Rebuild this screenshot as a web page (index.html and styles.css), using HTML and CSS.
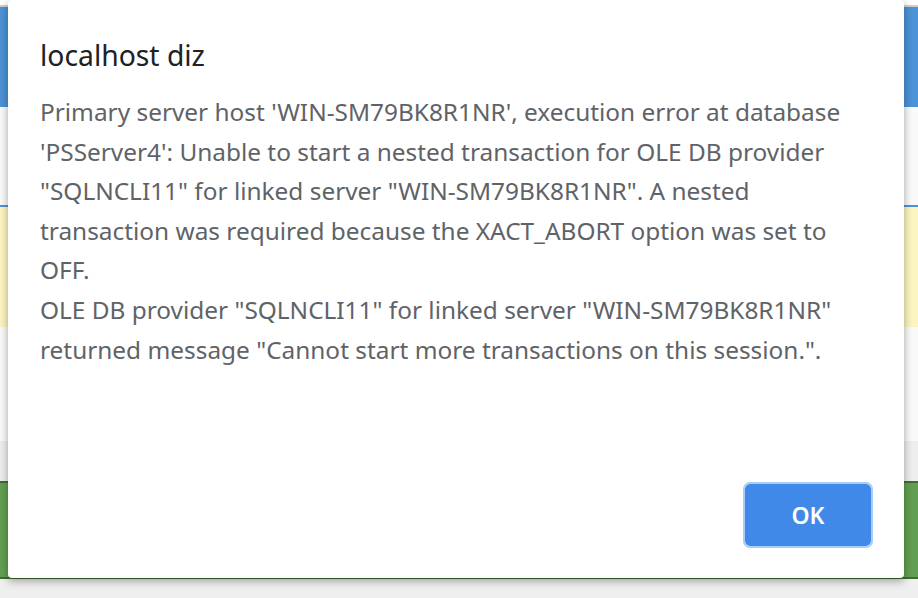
FILE: index.html
```html
<!DOCTYPE html>
<html lang="tr">
<head>
<meta charset="utf-8">
<title>localhost diz</title>
<link rel="stylesheet" href="styles.css">
</head>
<body>
<div class="page">
  <div class="top-gap"></div>
  <div class="top-line"></div>
  <div class="header"></div>
  <div class="sub"></div>
  <div class="alert"></div>
  <div class="content"></div>
  <div class="toolbar"></div>
  <div class="footer"></div>
  <div class="bottom"></div>
</div>
<div class="dialog" role="alertdialog">
  <div class="dialog-title">localhost diz</div>
  <div class="dialog-msg">Primary server host 'WIN-SM79BK8R1NR', execution error at database 'PSServer4': Unable to start a nested transaction for OLE DB provider "SQLNCLI11" for linked server "WIN-SM79BK8R1NR". A nested transaction was required because the XACT_ABORT option was set to OFF.<br>OLE DB provider "SQLNCLI11" for linked server "WIN-SM79BK8R1NR" returned message "Cannot start more transactions on this session.".</div>
  <div class="dialog-actions">
    <button class="ok-btn">OK</button>
  </div>
</div>
</body>
</html>
```

FILE: styles.css
```css
html, body {
  margin: 0;
  padding: 0;
}
body {
  width: 918px;
  height: 598px;
  overflow: hidden;
  position: relative;
  background: #efefef;
  font-family: "Noto Sans", "Open Sans", sans-serif;
}
.page {
  display: flex;
  flex-direction: column;
}
.top-gap { height: 5px; background: #ffffff; }
.top-line { height: 2px; background: #cfcfcf; }
.header { height: 100px; background: #4c93d7; }
.sub { height: 98px; background: #fafafa; border-bottom: 2px solid #4c93d7; }
.alert { height: 120px; background: #fcf5c1; }
.content { height: 114px; background: #fafafa; }
.toolbar { height: 40px; background: #eeeeee; }
.footer { height: 94px; background: #629f52; border-top: 2px solid #3d6d31; border-bottom: 2px solid #3d6d31; }
.bottom { height: 19px; background: #efefef; }

.dialog {
  position: absolute;
  left: 8px;
  top: 0;
  width: 896px;
  height: 578px;
  box-sizing: border-box;
  background: #ffffff;
  border-radius: 4px;
  box-shadow: 0 3px 8px rgba(0, 0, 0, 0.35);
  padding: 38px 32px 30px 32px;
  display: flex;
  flex-direction: column;
}
.dialog-title {
  font-size: 28.3px;
  line-height: 34px;
  color: #202124;
}
.dialog-msg {
  margin-top: 20px;
  font-size: 24.4px;
  line-height: 39.6px;
  color: #5f6368;
}
.dialog-actions {
  margin-top: auto;
  display: flex;
  justify-content: flex-end;
}
.ok-btn {
  width: 130px;
  height: 66px;
  margin-right: -1px;
  box-sizing: border-box;
  border: 2px solid #a9cdf7;
  border-radius: 7px;
  background: #4189e9;
  background-clip: padding-box;
  color: #ffffff;
  font-family: "Noto Sans", "Open Sans", sans-serif;
  font-size: 23px;
  font-weight: 600;
  padding: 0;
}
```
